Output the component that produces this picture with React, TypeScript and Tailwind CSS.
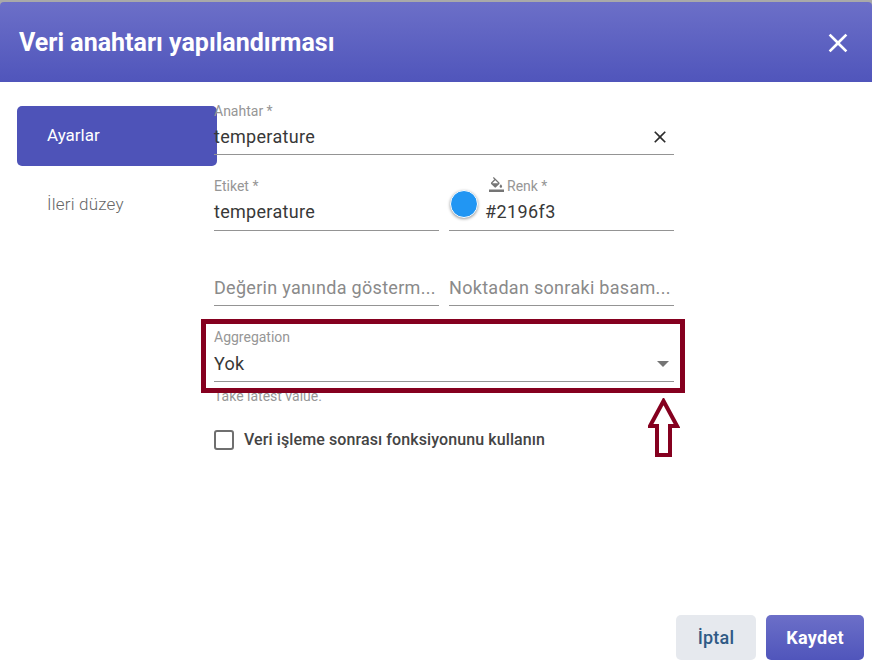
const font = "font-['Roboto',sans-serif]";

function CloseIcon({ className }: { className: string }) {
  return (
    <svg viewBox="0 0 24 24" className={className} fill="currentColor">
      <path d="M19 6.41L17.59 5 12 10.59 6.41 5 5 6.41 10.59 12 5 17.59 6.41 19 12 13.41 17.59 19 19 17.59 13.41 12z" />
    </svg>
  );
}

function FillIcon() {
  return (
    <svg viewBox="0 0 24 24" className="mr-[3px] h-[15px] w-[15px] -translate-y-[2px] text-[#757575]" fill="currentColor">
      <path d="M16.56 8.94L7.62 0 6.21 1.41l2.38 2.38-5.15 5.15c-.59.59-.59 1.54 0 2.12l5.5 5.5c.29.29.68.44 1.06.44s.77-.15 1.06-.44l5.5-5.5c.59-.58.59-1.53 0-2.12zM5.21 10L10 5.21 14.79 10H5.21zM19 11.5s-2 2.17-2 3.5c0 1.1.9 2 2 2s2-.9 2-2c0-1.33-2-3.5-2-3.5z" />
      <rect x="0" y="20" width="24" height="4" />
    </svg>
  );
}

function Field({
  label,
  value,
  placeholder,
  className = "",
  labelTop = "top-0",
  valueTop = "top-[22px]",
}: {
  label?: string;
  value?: string;
  placeholder?: string;
  className?: string;
  labelTop?: string;
  valueTop?: string;
}) {
  return (
    <div className={`relative h-[52px] border-b border-[#949494] ${className}`}>
      {label && <div className={`absolute left-0 ${labelTop} text-[14px] leading-[16px] text-[#969696]`}>{label}</div>}
      {value && <div className={`absolute left-0 ${valueTop} text-[18px] leading-[24px] tracking-[0.3px] text-[#383838]`}>{value}</div>}
      {placeholder && (
        <div className="absolute inset-x-0 top-[22px] truncate text-[18px] leading-[24px] tracking-[0.3px] text-[#8a8a8a]">{placeholder}</div>
      )}
    </div>
  );
}

export default function App() {
  return (
    <div className={`flex h-[668px] w-[872px] flex-col overflow-hidden bg-[#a9a9a9] pt-[2px] ${font}`}>
      <div className="flex h-[80px] shrink-0 items-center justify-between rounded-t-[4px] bg-gradient-to-b from-[#6c6fc8] to-[#5055bb] pl-[19px] pr-[18px] pt-[2px]">
        <h1 className="text-[25px] font-bold text-white">Veri anahtarı yapılandırması</h1>
        <CloseIcon className="h-[32px] w-[32px] text-white" />
      </div>

      <div className="flex min-h-0 flex-1 flex-col bg-white">
        <div className="flex flex-1">
          <div className="ml-[17px] w-[200px] shrink-0 pt-[24px]">
            <div className="flex h-[60px] items-center rounded-[5px] bg-[#4e53b8] pl-[30px] text-[17px] text-white">Ayarlar</div>
            <div className="flex h-[78px] items-center pl-[30px] text-[17px] font-light tracking-[0.2px] text-[#666666]">İleri düzey</div>
          </div>

          <div className="relative z-10 ml-[-3px] w-[460px] pt-[21px]">
            <div className="relative">
              <Field label="Anahtar *" value="temperature" />
              <CloseIcon className="absolute right-[4px] top-[24px] h-[20px] w-[20px] text-[#2b2b2b]" />
            </div>

            <div className="mt-[24px] flex gap-[10px]">
              <Field label="Etiket *" value="temperature" className="flex-1" labelTop="top-[-1px]" valueTop="top-[21px]" />
              <div className="relative h-[52px] flex-1 border-b border-[#949494]">
                <div className="absolute left-[1px] top-[11px] h-[28px] w-[28px] rounded-full border border-white bg-[#2196f3] shadow-[0_1px_3px_rgba(0,0,0,0.4)]" />
                <div className="absolute left-[40px] top-[-1px] flex items-center text-[14px] leading-[16px] text-[#969696]">
                  <FillIcon />
                  Renk *
                </div>
                <div className="absolute left-[36px] top-[21px] text-[18px] leading-[24px] tracking-[0.4px] text-[#383838]">#2196f3</div>
              </div>
            </div>

            <div className="mt-[23px] flex gap-[10px]">
              <Field placeholder="Değerin yanında gösterm..." className="min-w-0 flex-1" />
              <Field placeholder="Noktadan sonraki basam..." className="min-w-0 flex-1" />
            </div>

            <div className="relative mt-[24px]">
              <Field label="Aggregation" value="Yok" labelTop="top-[-1px]" />
              <div className="absolute right-[5px] top-[31px] h-0 w-0 border-x-[6px] border-t-[6px] border-x-transparent border-t-[#757575]" />
              <div className="mt-[6px] text-[14px] leading-[16px] text-[#969696]">Take latest value.</div>
              {/* red annotation over the field */}
              <div className="absolute left-[-13px] top-[-11px] h-[74px] w-[484px] border-[5px] border-[#85001f]" />
              <svg className="absolute left-[434px] top-[68px]" width="32" height="60" viewBox="0 0 32 60" fill="none">
                <path d="M15.5 3 L29 28 H22 V57 H9 V28 H2 Z" stroke="#85001f" strokeWidth="4" />
              </svg>
            </div>

            <div className="mt-[24px] flex items-center">
              <div className="h-[20px] w-[20px] rounded-[3px] border-2 border-[#6f6f6f]" />
              <span className="ml-[10px] text-[16px] font-medium tracking-[0.1px] text-[#444444]">Veri işleme sonrası fonksiyonunu kullanın</span>
            </div>
          </div>
        </div>

        <div className="flex justify-end gap-[10px] pb-[8px] pr-[8px]">
          <button className="h-[45px] w-[80px] rounded-[5px] bg-[#e6e9ee] text-[18px] font-medium tracking-[0.2px] text-[#2f5a85]">İptal</button>
          <button className="h-[45px] w-[98px] rounded-[5px] bg-gradient-to-b from-[#6c6fc8] to-[#5055bb] text-[18px] font-bold tracking-[0.3px] text-white">Kaydet</button>
        </div>
      </div>
    </div>
  );
}
